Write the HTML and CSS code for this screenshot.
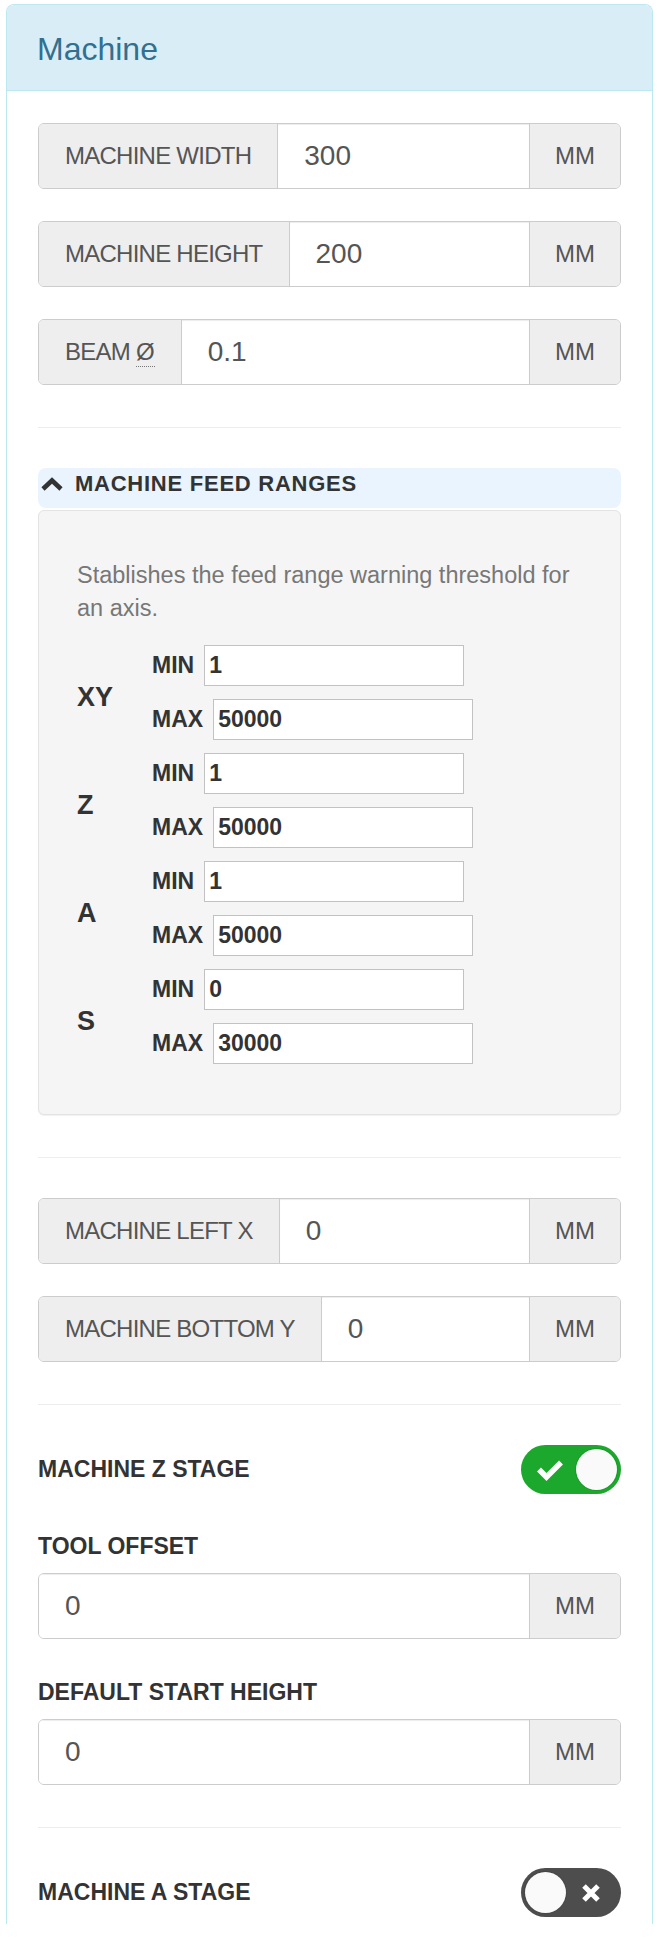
FILE: index.html
```html
<!DOCTYPE html>
<html>
<head>
<meta charset="utf-8">
<link rel="stylesheet" href="styles.css">
</head>
<body>
<div class="panel">
  <div class="panel-heading"><h3 class="panel-title">Machine</h3></div>
  <div class="panel-body">
    <div class="igroup">
      <span class="addon label-addon">MACHINE WIDTH</span>
      <input class="field" type="text" value="300">
      <span class="addon unit">MM</span>
    </div>
    <div class="igroup">
      <span class="addon label-addon">MACHINE HEIGHT</span>
      <input class="field" type="text" value="200">
      <span class="addon unit">MM</span>
    </div>
    <div class="igroup">
      <span class="addon label-addon">BEAM <abbr class="abbr" title="Diameter">Ø</abbr></span>
      <input class="field" type="text" value="0.1">
      <span class="addon unit">MM</span>
    </div>

    <hr class="sep">

    <div class="collapse-head">
      <svg class="chev" width="24" height="14" viewBox="0 0 24 14"><polyline points="3,12 12,3.5 21,12" fill="none" stroke="#333" stroke-width="4.6"/></svg>
      <span>MACHINE FEED RANGES</span>
    </div>
    <div class="well">
      <p class="help">Stablishes the feed range warning threshold for an axis.</p>
      <div class="axis">
        <div class="axis-name">XY</div>
        <div class="pair">
          <div class="bound"><label>MIN</label><input type="text" value="1"></div>
          <div class="bound"><label>MAX</label><input type="text" value="50000"></div>
        </div>
      </div>
      <div class="axis">
        <div class="axis-name">Z</div>
        <div class="pair">
          <div class="bound"><label>MIN</label><input type="text" value="1"></div>
          <div class="bound"><label>MAX</label><input type="text" value="50000"></div>
        </div>
      </div>
      <div class="axis">
        <div class="axis-name">A</div>
        <div class="pair">
          <div class="bound"><label>MIN</label><input type="text" value="1"></div>
          <div class="bound"><label>MAX</label><input type="text" value="50000"></div>
        </div>
      </div>
      <div class="axis">
        <div class="axis-name">S</div>
        <div class="pair">
          <div class="bound"><label>MIN</label><input type="text" value="0"></div>
          <div class="bound"><label>MAX</label><input type="text" value="30000"></div>
        </div>
      </div>
    </div>

    <hr class="sep">

    <div class="igroup">
      <span class="addon label-addon">MACHINE LEFT X</span>
      <input class="field" type="text" value="0">
      <span class="addon unit">MM</span>
    </div>
    <div class="igroup">
      <span class="addon label-addon">MACHINE BOTTOM Y</span>
      <input class="field" type="text" value="0">
      <span class="addon unit">MM</span>
    </div>

    <hr class="sep">

    <div class="switch-row">
      <span class="strong-label">MACHINE Z STAGE</span>
      <span class="toggle on">
        <svg class="ico-check" width="28" height="22" viewBox="0 0 28 22"><polyline points="3,10.5 10.5,18 25,3.5" fill="none" stroke="#fff" stroke-width="5.5"/></svg>
        <span class="knob"></span>
      </span>
    </div>

    <div class="field-label">TOOL OFFSET</div>
    <div class="igroup">
      <input class="field" type="text" value="0">
      <span class="addon unit">MM</span>
    </div>

    <div class="field-label">DEFAULT START HEIGHT</div>
    <div class="igroup">
      <input class="field" type="text" value="0">
      <span class="addon unit">MM</span>
    </div>

    <hr class="sep">

    <div class="switch-row last">
      <span class="strong-label">MACHINE A STAGE</span>
      <span class="toggle off">
        <span class="knob"></span>
        <svg class="ico-x" width="20" height="20" viewBox="0 0 20 20"><path d="M3,3 L17,17 M17,3 L3,17" fill="none" stroke="#fff" stroke-width="5"/></svg>
      </span>
    </div>
  </div>
</div>
</body>
</html>
```

FILE: styles.css
```css
* { box-sizing: border-box; }

html, body {
  margin: 0;
  padding: 0;
  background: #fff;
  font-family: "Liberation Sans", Arial, Helvetica, sans-serif;
  color: #333;
}

.panel {
  margin: 4px 0 0 6px;
  width: 647px;
  border: 1px solid #bce8f1;
  border-bottom: 0;
  border-radius: 8px 8px 0 0;
  background: #fff;
}

.panel-heading {
  background: #d9edf7;
  border-bottom: 1px solid #bce8f1;
  border-radius: 7px 7px 0 0;
  padding: 27px 30px 23px;
}

.panel-title {
  margin: 0;
  font-size: 32px;
  line-height: 35px;
  font-weight: normal;
  color: #31708f;
}

.panel-body {
  padding: 32px 31px 7px;
}

/* input groups */
.igroup {
  display: flex;
  height: 66px;
  border: 1px solid #ccc;
  border-radius: 6px;
  overflow: hidden;
  margin-bottom: 32px;
}

.addon {
  display: flex;
  align-items: center;
  background: #eee;
  color: #555;
  font-size: 24px;
  white-space: nowrap;
}

.label-addon {
  padding: 0 26px;
  border-right: 1px solid #ccc;
  letter-spacing: -0.75px;
}

.abbr {
  text-decoration: none;
  border-bottom: 1px dotted #777;
  margin-left: 6px;
  letter-spacing: 0;
}

.unit {
  width: 91px;
  flex: none;
  justify-content: center;
  border-left: 1px solid #ccc;
}

.field {
  flex: 1;
  min-width: 0;
  border: 0;
  outline: none;
  margin: 0;
  padding: 0 0 0 26px;
  font-family: "Liberation Sans", Arial, sans-serif;
  font-size: 28px;
  color: #555;
  background: #fff;
  box-shadow: inset 0 1px 1px rgba(0,0,0,0.075);
}

/* separators */
.sep {
  border: 0;
  border-top: 1px solid #eee;
  height: 0;
  margin: 42px 0 40px;
}

/* feed ranges */
.collapse-head {
  display: flex;
  align-items: center;
  height: 40px;
  padding: 0 0 8px 2px;
  background: #e9f4fe;
  border-radius: 8px;
  font-size: 22px;
  font-weight: bold;
  letter-spacing: 0.75px;
  color: #333;
}

.chev {
  margin-right: 11px;
  flex: none;
}

.well {
  margin-top: 2px;
  background: #f5f5f5;
  border: 1px solid #e3e3e3;
  border-radius: 6px;
  padding: 48px 38px 50px;
  box-shadow: 0 1px 1px rgba(0,0,0,0.06);
}

.help {
  margin: 0 0 20px;
  font-size: 23.5px;
  line-height: 33px;
  color: #777;
}

.axis {
  display: grid;
  grid-template-columns: 75px auto;
  align-items: center;
  margin-bottom: 13px;
}

.axis:last-child {
  margin-bottom: 0;
}

.axis-name {
  font-size: 27px;
  font-weight: bold;
  padding-top: 10px;
  color: #333;
}

.pair {
  display: flex;
  flex-direction: column;
  gap: 13px;
}

.bound {
  display: flex;
  align-items: center;
  gap: 10px;
}

.bound label {
  font-size: 23px;
  font-weight: bold;
  color: #333;
}

.bound input {
  width: 260px;
  height: 41px;
  margin: 0;
  border: 1px solid #c2c2c2;
  border-radius: 0;
  padding: 0 4px;
  background: #fff;
  font-family: "Liberation Sans", Arial, sans-serif;
  font-size: 23px;
  font-weight: bold;
  color: #333;
  outline: none;
}

/* switches */
.switch-row {
  display: flex;
  align-items: center;
  justify-content: space-between;
  margin-bottom: 39px;
}

.switch-row.last {
  margin-bottom: 0;
}

.strong-label {
  font-size: 23px;
  font-weight: bold;
  color: #333;
}

.toggle {
  display: flex;
  align-items: center;
  width: 100px;
  height: 49px;
  border-radius: 25px;
  flex: none;
}

.toggle.on {
  background: #1ba82c;
  justify-content: space-between;
  padding: 0 4px 0 15px;
}

.toggle.off {
  background: #4d4d4d;
  padding: 0 4px;
  gap: 15px;
}

.knob {
  width: 41px;
  height: 41px;
  border-radius: 50%;
  background: #fafafa;
  box-shadow: 0 0 0 1px rgba(0,0,0,0.08);
  flex: none;
}

.ico-check, .ico-x {
  flex: none;
  display: block;
}

.field-label {
  font-size: 23px;
  line-height: 26px;
  font-weight: bold;
  color: #333;
  margin-bottom: 14px;
}

.igroup + .field-label {
  margin-top: 40px;
}
```
